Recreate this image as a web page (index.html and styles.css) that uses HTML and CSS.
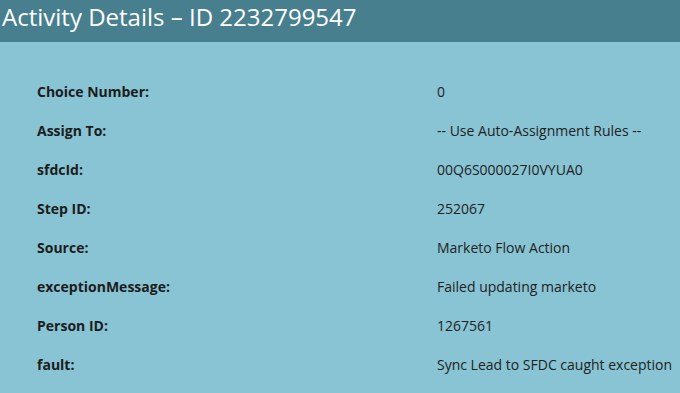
FILE: index.html
```html
<!DOCTYPE html>
<html>
<head>
<meta charset="utf-8">
<link rel="stylesheet" href="styles.css">
</head>
<body>
<div class="panel">
  <header class="panel-header">Activity Details – ID 2232799547</header>
  <dl class="details">
    <div class="row"><dt>Choice Number:</dt><dd>0</dd></div>
    <div class="row"><dt>Assign To:</dt><dd>-- Use Auto-Assignment Rules --</dd></div>
    <div class="row"><dt>sfdcId:</dt><dd>00Q6S000027I0VYUA0</dd></div>
    <div class="row"><dt>Step ID:</dt><dd>252067</dd></div>
    <div class="row"><dt>Source:</dt><dd>Marketo Flow Action</dd></div>
    <div class="row"><dt>exceptionMessage:</dt><dd>Failed updating marketo</dd></div>
    <div class="row"><dt>Person ID:</dt><dd>1267561</dd></div>
    <div class="row"><dt>fault:</dt><dd>Sync Lead to SFDC caught exception</dd></div>
  </dl>
</div>
</body>
</html>
```

FILE: styles.css
```css
html, body {
  margin: 0;
  padding: 0;
  background: #88c4d4;
  font-family: "Open Sans", "Noto Sans", sans-serif;
}

.panel {
  width: 680px;
  height: 393px;
  overflow: hidden;
}

.panel-header {
  height: 42px;
  box-sizing: border-box;
  background: #477f8f;
  color: #ffffff;
  font-size: 24px;
  line-height: 34px;
  padding-left: 2px;
}

.details {
  margin: 0;
  padding: 41px 0 0 37px;
}

.row {
  display: flex;
  height: 39px;
  align-items: flex-start;
  font-size: 14px;
  line-height: 18px;
  color: #1c1c1c;
}

.row dt {
  width: 400px;
  font-weight: 700;
}

.row dd {
  margin: 0;
  color: #222;
}
```
